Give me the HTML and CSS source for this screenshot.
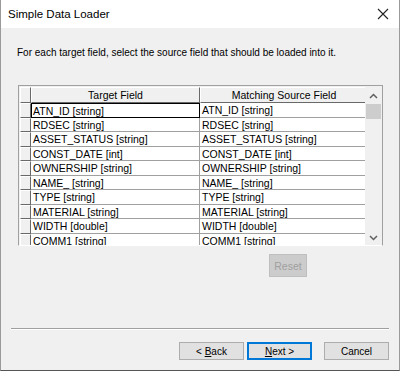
FILE: index.html
```html
<!DOCTYPE html>
<html lang="en">
<head>
    <meta charset="UTF-8">
    <title>Simple Data Loader</title>
    <link rel="stylesheet" href="styles.css">
</head>
<body>
    <div class="window">
        <div class="titlebar">
            <span class="title">Simple Data Loader</span>
            <svg class="close" width="12" height="12" viewBox="0 0 12 12">
                <path d="M1 1 L11 11 M11 1 L1 11" stroke="#222" stroke-width="1.1" fill="none"/>
            </svg>
        </div>

        <div class="content">
            <p class="intro">For each target field, select the source field that should be loaded into it.</p>

            <div class="grid">
                <div class="table">
                    <div class="corner"></div>
                    <div class="head">Target Field</div>
                    <div class="head">Matching Source Field</div>

                    <div class="rowhead"></div>
                    <div class="cell focus">ATN_ID [string]</div>
                    <div class="cell">ATN_ID [string]</div>

                    <div class="rowhead"></div>
                    <div class="cell">RDSEC [string]</div>
                    <div class="cell">RDSEC [string]</div>

                    <div class="rowhead"></div>
                    <div class="cell">ASSET_STATUS [string]</div>
                    <div class="cell">ASSET_STATUS [string]</div>

                    <div class="rowhead"></div>
                    <div class="cell">CONST_DATE [int]</div>
                    <div class="cell">CONST_DATE [int]</div>

                    <div class="rowhead"></div>
                    <div class="cell">OWNERSHIP [string]</div>
                    <div class="cell">OWNERSHIP [string]</div>

                    <div class="rowhead"></div>
                    <div class="cell">NAME_ [string]</div>
                    <div class="cell">NAME_ [string]</div>

                    <div class="rowhead"></div>
                    <div class="cell">TYPE [string]</div>
                    <div class="cell">TYPE [string]</div>

                    <div class="rowhead"></div>
                    <div class="cell">MATERIAL [string]</div>
                    <div class="cell">MATERIAL [string]</div>

                    <div class="rowhead"></div>
                    <div class="cell">WIDTH [double]</div>
                    <div class="cell">WIDTH [double]</div>

                    <div class="rowhead"></div>
                    <div class="cell">COMM1 [string]</div>
                    <div class="cell">COMM1 [string]</div>
                </div>
                <div class="scrollbar">
                    <svg class="arrow" width="9" height="6" viewBox="0 0 9 6">
                        <path d="M1 5 L4.5 1.5 L8 5" stroke="#606060" stroke-width="1.5" fill="none"/>
                    </svg>
                    <div class="thumb"></div>
                    <div class="track"></div>
                    <svg class="arrow" width="9" height="6" viewBox="0 0 9 6">
                        <path d="M1 1 L4.5 4.5 L8 1" stroke="#606060" stroke-width="1.5" fill="none"/>
                    </svg>
                </div>
            </div>

            <div class="reset-row">
                <button class="btn reset" disabled>Reset</button>
            </div>

            <div class="spacer"></div>
            <div class="separator"></div>

            <div class="buttons">
                <button class="btn">&lt; <u>B</u>ack</button>
                <button class="btn default"><u>N</u>ext &gt;</button>
                <button class="btn cancel">Cancel</button>
            </div>
        </div>
    </div>
</body>
</html>
```

FILE: styles.css
```css
* {
    box-sizing: border-box;
    margin: 0;
    padding: 0;
}

body {
    font-family: 'Liberation Sans', Arial, sans-serif;
    color: #000;
    background: #fff;
}

.window {
    width: 400px;
    height: 371px;
    display: flex;
    flex-direction: column;
    border-left: 1px solid #9a9a9a;
    border-right: 1px solid #9a9a9a;
    border-bottom: 1px solid #555;
}

.titlebar {
    height: 28px;
    background: #fff;
    display: flex;
    align-items: center;
    justify-content: space-between;
    padding: 0 10px 0 7px;
}

.title {
    font-size: 11.5px;
}

.content {
    flex: 1;
    background: #f0f0f0;
    display: flex;
    flex-direction: column;
    padding: 0 10px 10px 10px;
}

.intro {
    font-size: 10px;
    margin: 19px 0 0 6px;
    height: 12px;
    line-height: 12px;
}

.grid {
    margin: 26px 0 0 7px;
    width: 365px;
    height: 161px;
    border: 1px solid #a0a0a0;
    border-bottom-color: #fff;
    display: flex;
    background: #f0f0f0;
}

.table {
    flex: 1;
    overflow: hidden;
    display: grid;
    grid-template-columns: 11px 169px 168px;
    grid-template-rows: 16px;
    grid-auto-rows: 15px 14px;
    align-content: start;
    font-size: 10.5px;
    padding: 1px 0 0 1px;
}

.corner, .rowhead {
    background: #f0f0f0;
    border-top: 1px solid #fff;
    border-left: 1px solid #fff;
    border-right: 1px solid #696969;
    border-bottom: 1px solid #696969;
}

.head {
    background: #f0f0f0;
    border-top: 1px solid #fff;
    border-left: 1px solid #fff;
    border-right: 1px solid #696969;
    border-bottom: 1px solid #696969;
    text-align: center;
    line-height: 14px;
}

.cell {
    background: #fff;
    border-bottom: 1px solid #a0a0a0;
    border-right: 1px solid #a0a0a0;
    padding-left: 2px;
    display: flex;
    align-items: center;
    white-space: nowrap;
}

.focus {
    border: 1px solid #000;
    padding-left: 1px;
}

.scrollbar {
    width: 17px;
    display: flex;
    flex-direction: column;
    align-items: center;
    background: #f0f0f0;
    padding: 7px 0 4px;
}

.thumb {
    width: 15px;
    height: 15px;
    margin-top: 5px;
    background: #cdcdcd;
}

.track {
    flex: 1;
}

.reset-row {
    display: flex;
    justify-content: flex-end;
    padding-right: 82px;
    margin-top: 8px;
}

.btn {
    font-family: 'Liberation Sans', Arial, sans-serif;
    font-size: 10px;
    height: 18px;
    width: 65px;
    background: #e1e1e1;
    border: 1px solid #adadad;
    color: #000;
}

.btn u {
    text-decoration: underline;
}

.reset {
    width: 38px;
    height: 23px;
    background: #cccccc;
    border-color: #bfbfbf;
    color: #a0a0a0;
    font-size: 10.5px;
}

.spacer {
    flex: 1;
}

.separator {
    height: 2px;
    border-top: 1px solid #a0a0a0;
    border-bottom: 1px solid #fff;
}

.buttons {
    display: flex;
    justify-content: flex-end;
    gap: 3px;
    margin-top: 12px;
}

.default {
    border: 2px solid #0078d7;
}

.cancel {
    margin-left: 9px;
}
```
